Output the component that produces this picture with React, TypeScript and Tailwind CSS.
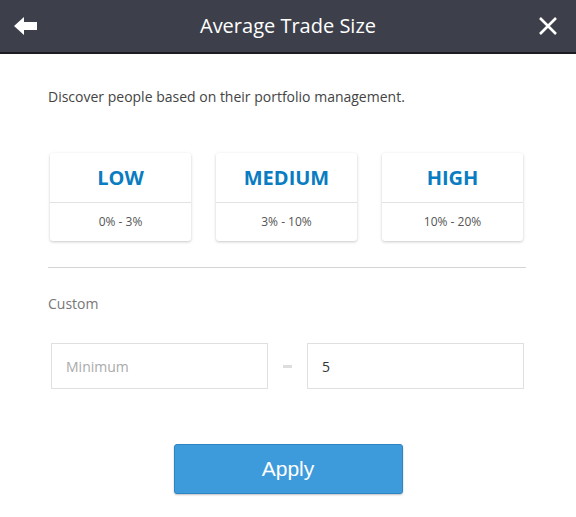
import { useState } from 'react';

// Filtro: tamaño medio de operación
const levels = [
  { name: 'LOW', range: '0% - 3%' },
  { name: 'MEDIUM', range: '3% - 10%' },
  { name: 'HIGH', range: '10% - 20%' },
];

export default function App() {
  const [min, setMin] = useState('');
  const [max, setMax] = useState('5');

  return (
    <div className="w-[576px] h-[517px] bg-white font-['Open_Sans',sans-serif] overflow-hidden">
      <header className="h-[54px] bg-[#3d3f4b] border-b-2 border-[#1c1c22] flex items-center justify-between px-[14px]">
        <button type="button" className="w-[24px] h-[20px] flex items-center">
          <svg width="24" height="18" viewBox="0 0 24 18">
            <path d="M0 9 L10 0 L10 5 L23 5 L23 13 L10 13 L10 18 Z" fill="#fff" />
          </svg>
        </button>
        <h1 className="text-white text-[20px] leading-none">Average Trade Size</h1>
        <button type="button" className="w-[20px] h-[20px] mr-[4px]">
          <svg width="20" height="20" viewBox="0 0 20 20">
            <path d="M2 2 L18 18 M18 2 L2 18" stroke="#fff" strokeWidth="2.6" />
          </svg>
        </button>
      </header>

      <div className="px-[48px]">
        <p className="mt-[33px] text-[14px] text-[#444] leading-[20px]">
          Discover people based on their portfolio management.
        </p>

        <div className="mt-[46px] flex gap-[25px] px-[2px]">
          {levels.map((l) => (
            <div key={l.name}
              className="w-[141px] h-[88px] bg-white rounded-[3px] shadow-[0_1px_3px_rgba(0,0,0,0.22)] flex flex-col">
              <div className="h-[50px] flex items-center justify-center border-b border-[#e2e2e2] pt-[1px]">
                <span className="text-[20px] font-bold text-[#0a7cc1]">{l.name}</span>
              </div>
              <div className="flex-1 flex items-center justify-center text-[12px] text-[#555]">{l.range}</div>
            </div>
          ))}
        </div>

        <div className="mt-[26px] h-px bg-[#d4d4d4] w-[478px]" />

        <p className="mt-[26px] text-[14px] text-[#777] leading-[20px]">Custom</p>

        <div className="mt-[29px] flex items-center px-[3px]">
          <input value={min} onChange={(e) => setMin(e.target.value)} placeholder="Minimum"
            className="w-[217px] h-[46px] border border-[#e0e0e0] px-[14px] text-[14px] text-[#333] placeholder:text-[#aaa] outline-none" />
          <div className="w-[39px] flex justify-center">
            <div className="w-[9px] h-[3px] bg-[#ddd]" />
          </div>
          <input value={max} onChange={(e) => setMax(e.target.value)} placeholder="Maximum"
            className="w-[217px] h-[46px] border border-[#e0e0e0] px-[14px] text-[14px] text-[#333] placeholder:text-[#aaa] outline-none" />
        </div>

        <div className="mt-[55px] flex justify-center">
          <button type="button"
            className="w-[229px] h-[50px] rounded-[3px] bg-[#3e9bdb] border border-[#2f84c4] shadow-[0_1px_2px_rgba(0,0,0,0.25)] text-white text-[21px] font-['Liberation_Sans',Arial,sans-serif]">
            Apply
          </button>
        </div>
      </div>
    </div>
  );
}
